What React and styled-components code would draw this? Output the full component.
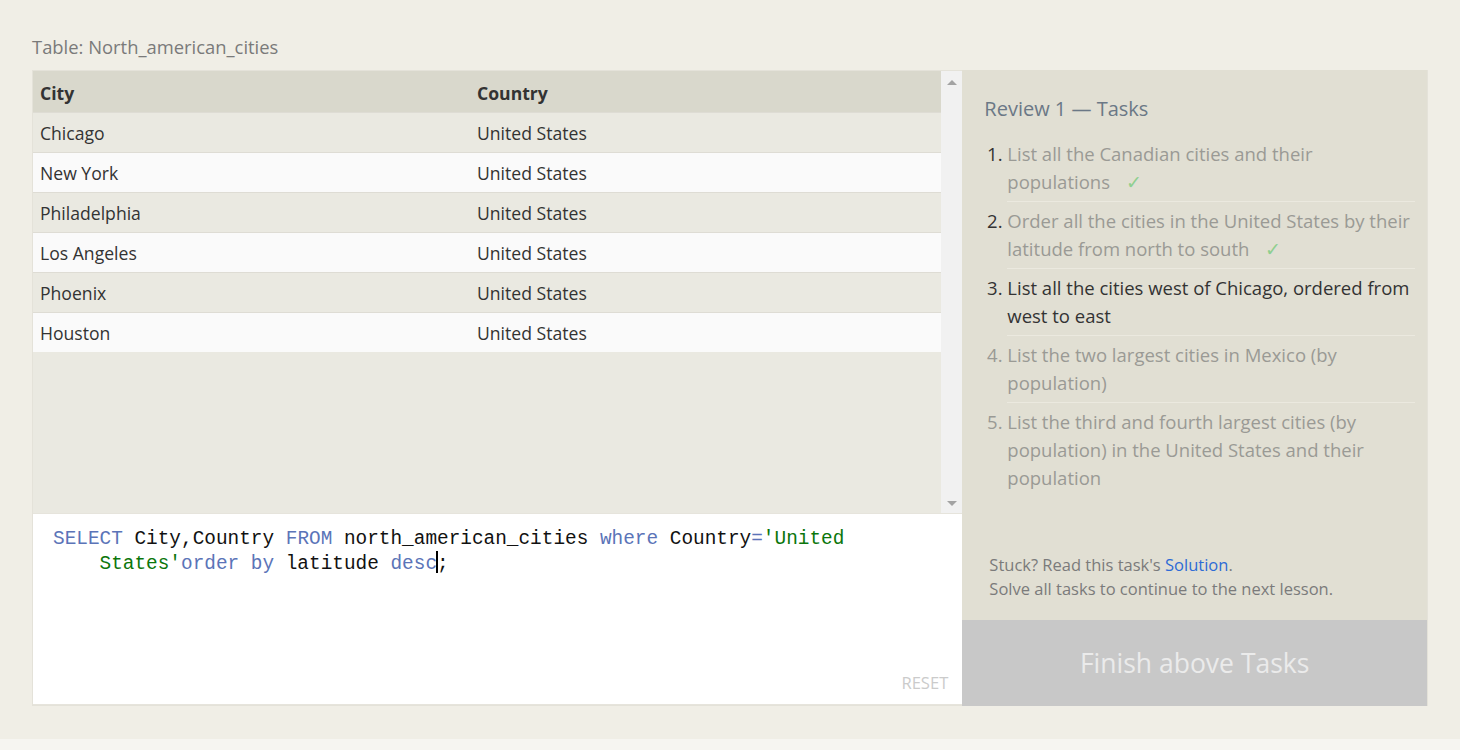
import React from 'react';
import styled, { createGlobalStyle } from 'styled-components';

const GlobalStyle = createGlobalStyle`
  html, body {
    margin: 0;
    padding: 0;
    background: #f6f5f1;
  }
  body {
    font-family: 'Open Sans', 'Noto Sans', sans-serif;
  }
`;

const Page = styled.div`
  height: 739px;
  box-sizing: border-box;
  padding: 34px 32px 0;
  background: #f0eee6;
`;

const TableTitle = styled.div`
  font-size: 18.4px;
  line-height: 26px;
  color: #7a7a7a;
  margin-bottom: 10px;
`;

const Workspace = styled.div`
  display: flex;
  width: 1396px;
  height: 636px;
`;

const LeftPanel = styled.div`
  display: flex;
  flex-direction: column;
  width: 931px;
  box-sizing: border-box;
  border: 1px solid #e4e2d9;
  border-right: none;
`;

const ResultArea = styled.div`
  display: flex;
  height: 442px;
  background: #eae9e1;
`;

const Table = styled.table`
  flex: 1;
  align-self: flex-start;
  border-collapse: collapse;
  font-size: 17.6px;
  color: #333;
`;

const HeadCell = styled.th`
  height: 41px;
  padding: 3px 7px 0;
  box-sizing: border-box;
  text-align: left;
  font-weight: 700;
  background: #d9d8cc;
  width: ${({ $width }) => $width || 'auto'};
`;

const Row = styled.tr`
  background: ${({ $even }) => ($even ? '#fafafa' : '#eae9e1')};
  border-top: 1px solid #dedcd4;
`;

const Cell = styled.td`
  height: 40px;
  box-sizing: border-box;
  padding: 1px 7px 0;
`;

const Scrollbar = styled.div`
  display: flex;
  flex-direction: column;
  justify-content: space-between;
  align-items: center;
  width: 21px;
  padding: 9px 0 7px;
  box-sizing: border-box;
  background: #f1f1f1;
`;

const Arrow = styled.span`
  width: 0;
  height: 0;
  border-left: 5px solid transparent;
  border-right: 5px solid transparent;
  ${({ $down }) =>
    $down ? 'border-top: 5px solid #a3a3a3;' : 'border-bottom: 5px solid #a3a3a3;'}
`;

const Editor = styled.div`
  flex: 1;
  display: flex;
  flex-direction: column;
  background: #fff;
  border-top: 1px solid #e6e4dc;
  border-bottom: 1px solid #e6e4dc;
  padding: 13px 14px 10px 20px;
`;

const Code = styled.pre`
  margin: 0;
  font-family: 'Liberation Mono', 'DejaVu Sans Mono', monospace;
  font-size: 19.4px;
  line-height: 24px;
  color: #111;
`;

const CodeLine = styled.div`
  padding-left: ${({ $indent }) => ($indent ? '4ch' : '0')};
`;

const Keyword = styled.span`
  color: #5b74b8;
`;

const Str = styled.span`
  color: #0b760b;
`;

const Caret = styled.span`
  display: inline-block;
  width: 2px;
  height: 22px;
  margin: 0 -1px -4px;
  background: #000;
`;

const ResetButton = styled.span`
  margin-top: auto;
  align-self: flex-end;
  font-size: 16.6px;
  line-height: 22px;
  color: #cbcbcb;
`;

const TaskPanel = styled.div`
  display: flex;
  flex-direction: column;
  width: 465px;
  background: #e1dfd3;
  border-right: 1px solid #e4e2d9;
`;

const TaskBody = styled.div`
  flex: 1;
  display: flex;
  flex-direction: column;
  padding: 25px 12px 19px 22px;
`;

const TaskHeading = styled.h2`
  margin: 0 0 12px;
  font-size: 20px;
  font-weight: 400;
  line-height: 28px;
  color: #6b7886;
`;

const TaskList = styled.ol`
  margin: 0;
  padding: 0 0 0 23px;
  font-size: 18.5px;
  line-height: 28px;
`;

const TaskItem = styled.li`
  padding: 5px 0;
  border-bottom: ${({ $last }) => ($last ? 'none' : '1px solid #ebe9df')};
  color: ${({ $state }) => ($state === 'todo' ? '#9a9a95' : '#333')};
`;

const TaskText = styled.span`
  color: ${({ $state }) => ($state === 'done' ? '#9a9a95' : 'inherit')};
`;

const Check = styled.span`
  display: inline-block;
  margin-left: 16px;
  color: #8fcf8f;
`;

const Hint = styled.div`
  margin-top: auto;
  padding-left: 5px;
  font-size: 16.5px;
  line-height: 24px;
  color: #7b7b7b;
`;

const SolutionLink = styled.a`
  color: #2d6bd6;
  text-decoration: none;
`;

const FinishButton = styled.div`
  height: 86px;
  display: flex;
  align-items: center;
  justify-content: center;
  background: #c8c8c8;
  color: #ebebeb;
  font-size: 26.5px;
`;

const rows = ['Chicago', 'New York', 'Philadelphia', 'Los Angeles', 'Phoenix', 'Houston'];

const tasks = [
  { text: 'List all the Canadian cities and their populations', state: 'done' },
  { text: 'Order all the cities in the United States by their latitude from north to south', state: 'done' },
  { text: 'List all the cities west of Chicago, ordered from west to east', state: 'current' },
  { text: 'List the two largest cities in Mexico (by population)', state: 'todo' },
  { text: 'List the third and fourth largest cities (by population) in the United States and their population', state: 'todo' },
];

const App = () => {
  return (
    <>
      <GlobalStyle />
      <Page>
        <TableTitle>Table: North_american_cities</TableTitle>
        <Workspace>
          <LeftPanel>
            <ResultArea>
              <Table>
                <thead>
                  <tr>
                    <HeadCell $width="437px">City</HeadCell>
                    <HeadCell>Country</HeadCell>
                  </tr>
                </thead>
                <tbody>
                  {rows.map((city, i) => (
                    <Row key={city} $even={i % 2 === 1}>
                      <Cell>{city}</Cell>
                      <Cell>United States</Cell>
                    </Row>
                  ))}
                </tbody>
              </Table>
              <Scrollbar>
                <Arrow />
                <Arrow $down />
              </Scrollbar>
            </ResultArea>
            <Editor>
              <Code>
                <CodeLine>
                  <Keyword>SELECT</Keyword> City,Country <Keyword>FROM</Keyword> north_american_cities{' '}
                  <Keyword>where</Keyword> Country<Keyword>=</Keyword>
                  <Str>'United</Str>
                </CodeLine>
                <CodeLine $indent>
                  <Str>States'</Str>
                  <Keyword>order by</Keyword> latitude <Keyword>desc</Keyword>
                  <Caret />;
                </CodeLine>
              </Code>
              <ResetButton>RESET</ResetButton>
            </Editor>
          </LeftPanel>
          <TaskPanel>
            <TaskBody>
              <TaskHeading>Review 1 — Tasks</TaskHeading>
              <TaskList>
                {tasks.map((task, i) => (
                  <TaskItem key={task.text} $state={task.state} $last={i === tasks.length - 1}>
                    <TaskText $state={task.state}>{task.text}</TaskText>
                    {task.state === 'done' && <Check>✓</Check>}
                  </TaskItem>
                ))}
              </TaskList>
              <Hint>
                Stuck? Read this task's <SolutionLink href="#">Solution</SolutionLink>.
                <br />
                Solve all tasks to continue to the next lesson.
              </Hint>
            </TaskBody>
            <FinishButton>Finish above Tasks</FinishButton>
          </TaskPanel>
        </Workspace>
      </Page>
    </>
  );
};

export default App;
